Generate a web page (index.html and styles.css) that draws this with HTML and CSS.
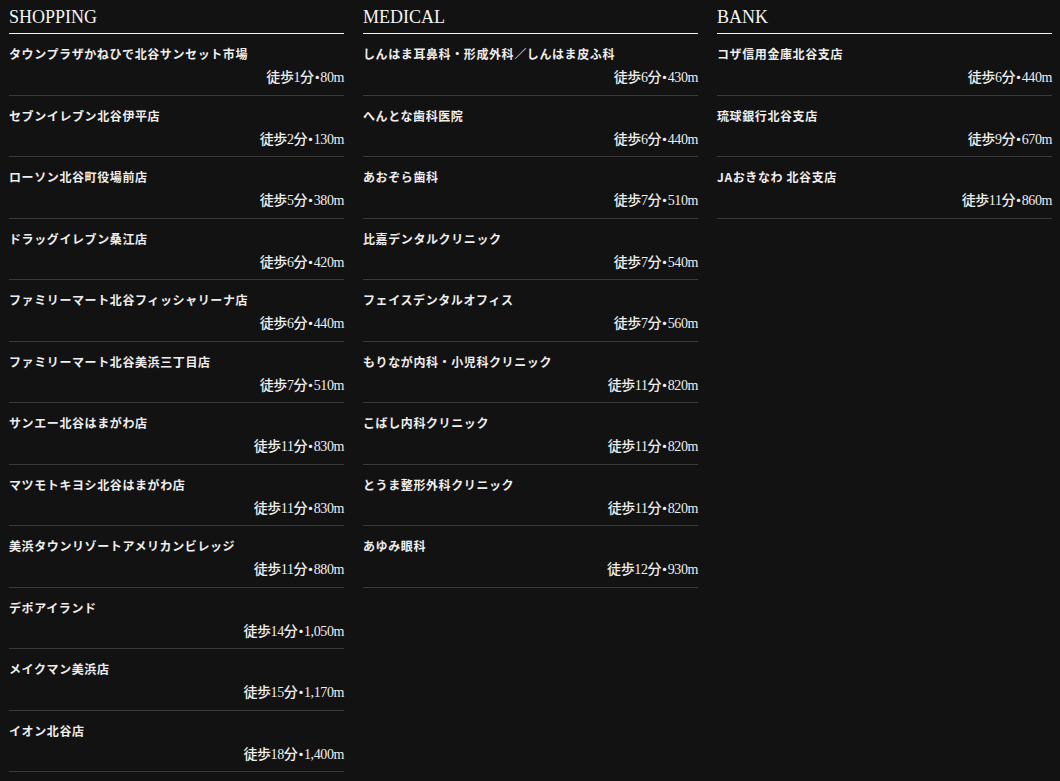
FILE: index.html
```html
<!DOCTYPE html>
<html lang="ja">
<head>
<meta charset="utf-8">
<link rel="stylesheet" href="styles.css">
</head>
<body>
<div class="cols">
  <section class="col">
    <h2 class="head">SHOPPING</h2>
    <ul class="list">
      <li class="row"><span class="name">タウンプラザかねひで北谷サンセット市場</span><span class="dist">徒歩1分・80m</span></li>
      <li class="row"><span class="name">セブンイレブン北谷伊平店</span><span class="dist">徒歩2分・130m</span></li>
      <li class="row"><span class="name">ローソン北谷町役場前店</span><span class="dist">徒歩5分・380m</span></li>
      <li class="row"><span class="name">ドラッグイレブン桑江店</span><span class="dist">徒歩6分・420m</span></li>
      <li class="row"><span class="name">ファミリーマート北谷フィッシャリーナ店</span><span class="dist">徒歩6分・440m</span></li>
      <li class="row"><span class="name">ファミリーマート北谷美浜三丁目店</span><span class="dist">徒歩7分・510m</span></li>
      <li class="row"><span class="name">サンエー北谷はまがわ店</span><span class="dist">徒歩11分・830m</span></li>
      <li class="row"><span class="name">マツモトキヨシ北谷はまがわ店</span><span class="dist">徒歩11分・830m</span></li>
      <li class="row"><span class="name">美浜タウンリゾートアメリカンビレッジ</span><span class="dist">徒歩11分・880m</span></li>
      <li class="row"><span class="name">デポアイランド</span><span class="dist">徒歩14分・1,050m</span></li>
      <li class="row"><span class="name">メイクマン美浜店</span><span class="dist">徒歩15分・1,170m</span></li>
      <li class="row"><span class="name">イオン北谷店</span><span class="dist">徒歩18分・1,400m</span></li>
    </ul>
  </section>
  <section class="col">
    <h2 class="head">MEDICAL</h2>
    <ul class="list">
      <li class="row"><span class="name">しんはま耳鼻科・形成外科／しんはま皮ふ科</span><span class="dist">徒歩6分・430m</span></li>
      <li class="row"><span class="name">へんとな歯科医院</span><span class="dist">徒歩6分・440m</span></li>
      <li class="row"><span class="name">あおぞら歯科</span><span class="dist">徒歩7分・510m</span></li>
      <li class="row"><span class="name">比嘉デンタルクリニック</span><span class="dist">徒歩7分・540m</span></li>
      <li class="row"><span class="name">フェイスデンタルオフィス</span><span class="dist">徒歩7分・560m</span></li>
      <li class="row"><span class="name">もりなが内科・小児科クリニック</span><span class="dist">徒歩11分・820m</span></li>
      <li class="row"><span class="name">こばし内科クリニック</span><span class="dist">徒歩11分・820m</span></li>
      <li class="row"><span class="name">とうま整形外科クリニック</span><span class="dist">徒歩11分・820m</span></li>
      <li class="row"><span class="name">あゆみ眼科</span><span class="dist">徒歩12分・930m</span></li>
    </ul>
  </section>
  <section class="col">
    <h2 class="head">BANK</h2>
    <ul class="list">
      <li class="row"><span class="name">コザ信用金庫北谷支店</span><span class="dist">徒歩6分・440m</span></li>
      <li class="row"><span class="name">琉球銀行北谷支店</span><span class="dist">徒歩9分・670m</span></li>
      <li class="row"><span class="name">JAおきなわ 北谷支店</span><span class="dist">徒歩11分・860m</span></li>
    </ul>
  </section>
</div>
</body>
</html>
```
FILE: styles.css
```css
html, body {
  margin: 0;
  padding: 0;
  background: #121212;
  color: #f2f2f2;
  font-family: "Liberation Serif", "Noto Sans CJK JP", serif;
}
.cols {
  display: grid;
  grid-template-columns: 335px 335px 335px;
  column-gap: 19px;
  padding: 0 8px 0 9px;
}
.head {
  margin: 0;
  padding-top: 7px;
  height: 26px;
  font-size: 18px;
  line-height: 20px;
  font-weight: normal;
  border-bottom: 1px solid #f0f0f0;
  color: #f4f4f4;
}
.list {
  list-style: none;
  margin: 0;
  padding: 0;
}
.row {
  display: flex;
  flex-direction: column;
  padding: 12px 0 8.5px 0;
  border-bottom: 1px solid #3a3a3a;
}
.name {
  font-family: "Noto Sans CJK JP", sans-serif;
  font-size: 12px;
  font-weight: 700;
  line-height: 16px;
  letter-spacing: 0.6px;
  color: #eeeeee;
}
.dist {
  margin-top: 8px;
  align-self: flex-end;
  font-family: "Liberation Serif", "Noto Sans CJK JP", serif;
  font-size: 14px;
  font-weight: 500;
  font-feature-settings: "palt";
  letter-spacing: -0.4px;
  line-height: 16px;
  color: #eeeeee;
}
```
